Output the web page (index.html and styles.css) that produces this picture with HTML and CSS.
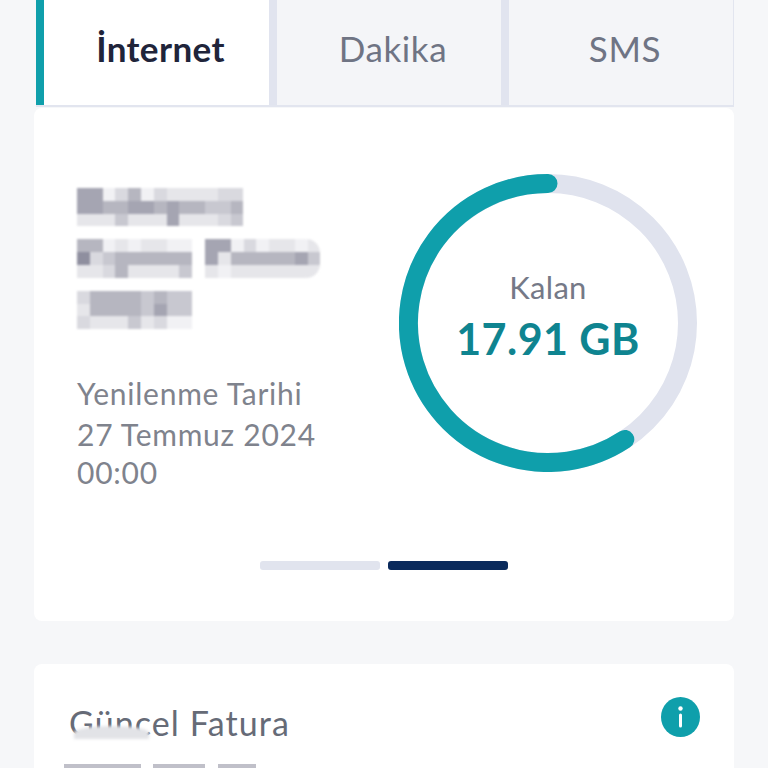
FILE: index.html
```html
<!DOCTYPE html>
<html lang="tr">
<head>
<meta charset="utf-8">
<title>Kalan</title>
<link rel="stylesheet" href="styles.css">
</head>
<body>
<main class="page">
  <nav class="tabs">
    <div class="tab tab-active">İnternet</div>
    <div class="tab">Dakika</div>
    <div class="tab">SMS</div>
  </nav>
  <section class="card usage">
    <div class="usage-row">
      <div class="usage-info">
        <div class="redacted">
          <div class="pix-line">
            <div class="pix">
              <i class="a"></i><i class="a"></i><i class="f"></i><i class="d"></i><i class="b"></i><i class="f"></i><i class="d"></i><i class="e"></i><i class="e"></i><i class="e"></i><i class="e"></i><i class="d"></i><i class="d"></i>
              <i class="a"></i><i class="a"></i><i class="b"></i><i class="b"></i><i class="a"></i><i class="a"></i><i class="b"></i><i class="a"></i><i class="b"></i><i class="b"></i><i class="c"></i><i class="c"></i><i class="b"></i>
              <i class="e"></i><i class="e"></i><i class="e"></i><i class="c"></i><i class="e"></i><i class="e"></i><i class="e"></i><i class="a"></i><i class="e"></i><i class="e"></i><i class="e"></i><i class="d"></i><i class="c"></i>
            </div>
          </div>
          <div class="pix-line">
            <div class="pix">
              <i class="b"></i><i class="b"></i><i class="f"></i><i class="e"></i><i class="f"></i><i class="e"></i><i class="e"></i><i class="f"></i><i class="f"></i>
              <i class="z"></i><i class="d"></i><i class="c"></i><i class="b"></i><i class="b"></i><i class="b"></i><i class="b"></i><i class="b"></i><i class="b"></i>
              <i class="e"></i><i class="e"></i><i class="d"></i><i class="b"></i><i class="e"></i><i class="e"></i><i class="e"></i><i class="e"></i><i class="c"></i>
            </div>
            <div class="pix pix-round">
              <i class="a"></i><i class="a"></i><i class="f"></i><i class="d"></i><i class="f"></i><i class="e"></i><i class="e"></i><i class="f"></i><i class="e"></i>
              <i class="a"></i><i class="e"></i><i class="b"></i><i class="b"></i><i class="b"></i><i class="b"></i><i class="b"></i><i class="a"></i><i class="c"></i>
              <i class="e"></i><i class="f"></i><i class="e"></i><i class="e"></i><i class="e"></i><i class="e"></i><i class="e"></i><i class="e"></i><i class="e"></i>
            </div>
          </div>
          <div class="pix-line">
            <div class="pix">
              <i class="d"></i><i class="b"></i><i class="b"></i><i class="b"></i><i class="b"></i><i class="c"></i><i class="b"></i><i class="c"></i><i class="c"></i>
              <i class="e"></i><i class="b"></i><i class="b"></i><i class="b"></i><i class="b"></i><i class="c"></i><i class="a"></i><i class="c"></i><i class="c"></i>
              <i class="d"></i><i class="e"></i><i class="e"></i><i class="e"></i><i class="c"></i><i class="e"></i><i class="d"></i><i class="f"></i><i class="f"></i>
            </div>
          </div>
        </div>
        <p class="renew-label">Yenilenme Tarihi</p>
        <p class="renew-date">27 Temmuz 2024<br>00:00</p>
      </div>
      <div class="ring">
        <svg class="ring-svg" viewBox="0 0 298 298" aria-hidden="true">
          <circle class="ring-track" cx="149" cy="149" r="139.5"></circle>
          <path class="ring-value" d="M149 9.5A139.5 139.5 0 1 0 225.8 265.4"></path>
        </svg>
        <div class="ring-text">
          <span class="ring-label">Kalan</span>
          <span class="ring-amount">17.91 GB</span>
        </div>
      </div>
    </div>
    <div class="pager">
      <span class="pager-bar"></span>
      <span class="pager-bar pager-bar-on"></span>
    </div>
  </section>
  <section class="card bill">
    <div class="bill-head">
      <h2 class="bill-title">Güncel Fatura</h2>
      <svg class="info" viewBox="0 0 39 40" aria-hidden="true">
        <ellipse class="info-bg" cx="19.5" cy="20" rx="19.5" ry="20"></ellipse>
        <circle class="info-fg" cx="19.5" cy="11.5" r="2.2"></circle>
        <rect class="info-fg" x="18" y="16.5" width="3" height="14" rx="1.5"></rect>
      </svg>
      <span class="smudge"></span>
    </div>
    <div class="bill-pix">
      <span class="bp bp1"></span>
      <span class="bp bp2"></span>
      <span class="bp bp3"></span>
    </div>
  </section>
</main>
</body>
</html>
```
FILE: styles.css
```css
* { box-sizing: border-box; }
html, body { margin: 0; height: 100%; }
body {
  background: #f6f7f9;
  overflow: hidden;
  font-family: "Lato", "Noto Sans", sans-serif;
}
.page { padding: 0 34px; height: 768px; overflow: hidden; }

.tabs {
  display: flex;
  height: 107px;
  margin: 0 0 1px 2px;
  border-bottom: 2px solid #e2e5ef;
  border-right: 1px solid #e2e5ef;
}
.tab {
  flex: 1 1 0;
  display: flex;
  align-items: center;
  justify-content: center;
  padding: 0 0 10px 8px;
  font-size: 35px;
  letter-spacing: 0.6px;
  color: #6f7484;
  border-left: 8px solid #e1e4ef;
  background: #f4f5f8;
}
.tab-active {
  flex: 0 0 233px;
  border-left-color: #0f9fab;
  background: #fff;
  color: #20243a;
  font-weight: 700;
  letter-spacing: 0.4px;
}

.card { background: #fff; border-radius: 8px; }
.usage { height: 513px; padding: 66px 37px 0 43px; }
.usage-row { display: flex; justify-content: space-between; align-items: flex-start; height: 298px; }
.usage-info { padding-top: 14px; }

.redacted { display: flex; flex-direction: column; gap: 13px; margin-bottom: 45px; filter: blur(1px); }
.pix-line { display: flex; gap: 13px; }
.pix { display: grid; grid-auto-rows: 12.8px; }
.pix-line .pix { grid-template-columns: repeat(9, 12.8px); }
.pix-line:first-child .pix { grid-template-columns: repeat(13, 12.8px); }
.pix-round { border-radius: 0 14px 14px 0; overflow: hidden; }
.pix i { display: block; }
.a { background: #a5a5b2; }
.b { background: #b6b6c0; }
.c { background: #c8c8d0; }
.d { background: #d9d9df; }
.e { background: #e6e6ea; }
.f { background: #f1f1f4; }
.z { background: #8f8f9f; }

.renew-label, .renew-date {
  margin: 0;
  font-size: 30px;
  letter-spacing: 0.75px;
  color: #7f838d;
}
.renew-label { line-height: 38px; margin-bottom: 3px; }
.renew-date { line-height: 38px; }

.ring { position: relative; width: 298px; height: 298px; flex: none; }
.ring-svg { display: block; width: 298px; height: 298px; }
.ring-track { fill: none; stroke: #e0e3ee; stroke-width: 19; }
.ring-value { fill: none; stroke: #0f9fab; stroke-width: 19; stroke-linecap: round; }
.ring-text {
  position: absolute;
  inset: 0;
  display: flex;
  flex-direction: column;
  align-items: center;
  padding-top: 93px;
}
.ring-label { font-size: 31px; line-height: 40px; letter-spacing: 0.3px; color: #757987; }
.ring-amount { font-size: 43px; line-height: 58px; margin-top: 3px; letter-spacing: 0.45px; font-weight: 700; color: #0f8490; }

.pager { display: flex; justify-content: center; gap: 8px; margin: 89px 0 0 -6px; }
.pager-bar { width: 120px; height: 9px; border-radius: 3px; background: #e1e4ee; }
.pager-bar-on { background: #0a2a5c; }

.bill { margin-top: 43px; height: 160px; padding: 33px 34px 0 35px; }
.bill-head { position: relative; display: flex; justify-content: space-between; align-items: flex-start; }
.bill-title { margin: 7px 0 0; font-size: 34px; line-height: 38px; letter-spacing: 1.1px; font-weight: 400; color: #666b77; }
.info { width: 39px; height: 40px; flex: none; }
.info-bg { fill: #0f9fab; }
.info-fg { fill: #fff; }
.smudge {
  position: absolute;
  left: 5px;
  top: 29px;
  width: 75px;
  height: 13px;
  background: #e2e3e7;
  border-radius: 50% 50% 0 0;
  filter: blur(1.5px);
}
.bill-pix { display: flex; margin: 22px 0 0 -5px; height: 6px; }
.bp { height: 6px; background: #c0c0c9; filter: blur(0.6px); }
.bp1 { width: 77px; }
.bp2 { width: 52px; margin-left: 12px; }
.bp3 { width: 38px; margin-left: 13px; }
```
